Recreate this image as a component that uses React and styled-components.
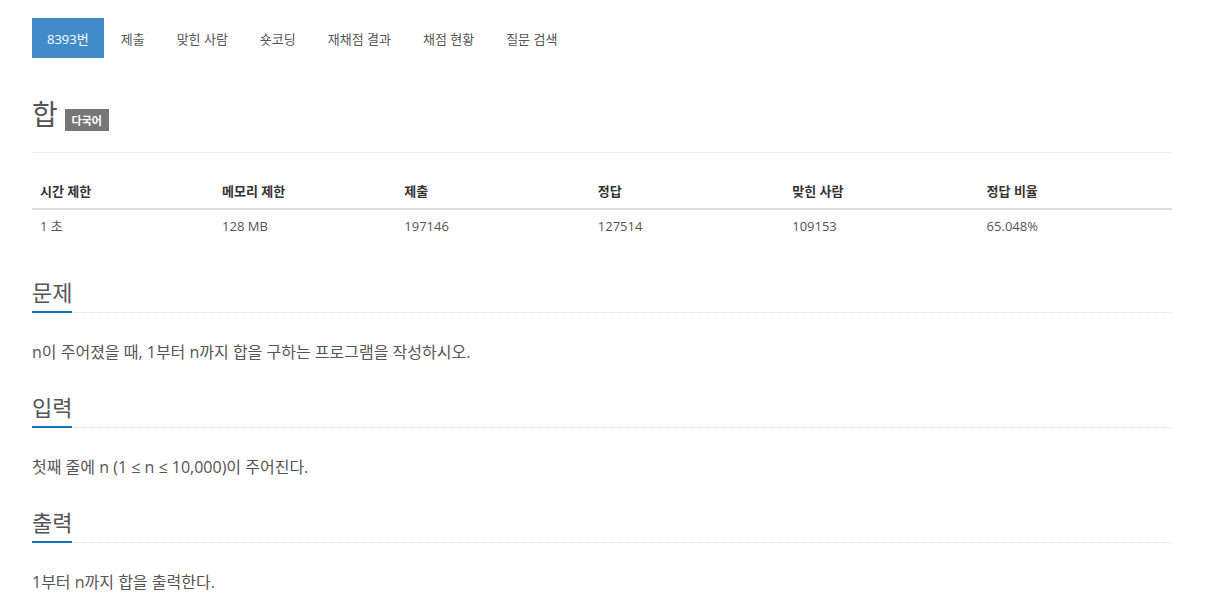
import React from 'react'
import styled, { createGlobalStyle } from 'styled-components'

const GlobalStyle = createGlobalStyle`
  html, body {
    margin: 0;
    padding: 0;
    background: #fff;
  }
  body {
    font-family: "Open Sans", "Noto Sans CJK KR", sans-serif;
    color: #555;
  }
`

const Page = styled.div`
  width: 1140px;
  padding: 18px 0 0 32px;
`

const Nav = styled.ul`
  display: flex;
  list-style: none;
  margin: 0;
  padding: 0;
  gap: 2px;
`

const Tab = styled.li`
  height: 40px;
  display: flex;
  align-items: center;
  padding: 0 15px;
  font-size: 13px;
  color: ${p => (p.$active ? '#fff' : '#555')};
  background: ${p => (p.$active ? '#428bca' : 'transparent')};
`

const TitleRow = styled.div`
  display: flex;
  align-items: flex-end;
  gap: 7px;
  margin-top: 36px;
  padding-bottom: 18px;
  border-bottom: 1px solid #eee;
`

const Title = styled.h1`
  margin: 0;
  font-size: 28px;
  font-weight: 400;
  line-height: 40px;
  color: #555;
`

const Badge = styled.span`
  display: inline-flex;
  align-items: center;
  justify-content: center;
  height: 22px;
  width: 44px;
  margin-bottom: 3px;
  background: #777;
  color: #fff;
  font-size: 11px;
  font-weight: 700;
`

const Table = styled.table`
  width: 100%;
  border-collapse: collapse;
  margin-top: 19px;
  font-size: 13px;
`

const Th = styled.th`
  width: ${p => p.$w}px;
  text-align: left;
  padding: 9px 8px 7px;
  line-height: 20px;
  font-weight: 700;
  color: #333;
  border-bottom: 2px solid #ddd;
`

const Td = styled.td`
  padding: 6px 8px 10px;
  line-height: 20px;
  color: #555;
`

const Section = styled.section`
  margin-top: ${p => p.$top}px;
`

const Headline = styled.h2`
  margin: 0;
  font-size: 22px;
  font-weight: 400;
  line-height: 30px;
  color: #555;
  padding-bottom: 5px;
  border-bottom: 1px dotted #ddd;
  position: relative;
  &::after {
    content: '';
    position: absolute;
    left: 0;
    bottom: -1px;
    width: 40px;
    height: 2px;
    background: #1273b8;
  }
`

const Text = styled.p`
  margin: 27px 0 0;
  font-size: 16px;
  line-height: 24px;
  color: #555;
`

const tabs = ['8393번', '제출', '맞힌 사람', '숏코딩', '재채점 결과', '채점 현황', '질문 검색']

const cols = [
  ['시간 제한', '1 초', 184],
  ['메모리 제한', '128 MB', 183],
  ['제출', '197146', 193],
  ['정답', '127514', 194],
  ['맞힌 사람', '109153', 194],
  ['정답 비율', '65.048%', 192],
]

const sections = [
  ['문제', 'n이 주어졌을 때, 1부터 n까지 합을 구하는 프로그램을 작성하시오.'],
  ['입력', '첫째 줄에 n (1 ≤ n ≤ 10,000)이 주어진다.'],
  ['출력', '1부터 n까지 합을 출력한다.'],
]

export default function App() {
  return (
    <>
      <GlobalStyle />
      <Page>
        <Nav>
          {tabs.map((t, i) => (
            <Tab key={t} $active={i === 0}>{t}</Tab>
          ))}
        </Nav>

        <TitleRow>
          <Title>합</Title>
          <Badge>다국어</Badge>
        </TitleRow>

        <Table>
          <thead>
            <tr>
              {cols.map(c => (
                <Th key={c[0]} $w={c[2]}>{c[0]}</Th>
              ))}
            </tr>
          </thead>
          <tbody>
            <tr>
              {cols.map(c => (
                <Td key={c[0]}>{c[1]}</Td>
              ))}
            </tr>
          </tbody>
        </Table>

        {sections.map((s, i) => (
          <Section key={s[0]} $top={i === 0 ? 31 : 28}>
            <Headline>{s[0]}</Headline>
            <Text>{s[1]}</Text>
          </Section>
        ))}
      </Page>
    </>
  )
}
